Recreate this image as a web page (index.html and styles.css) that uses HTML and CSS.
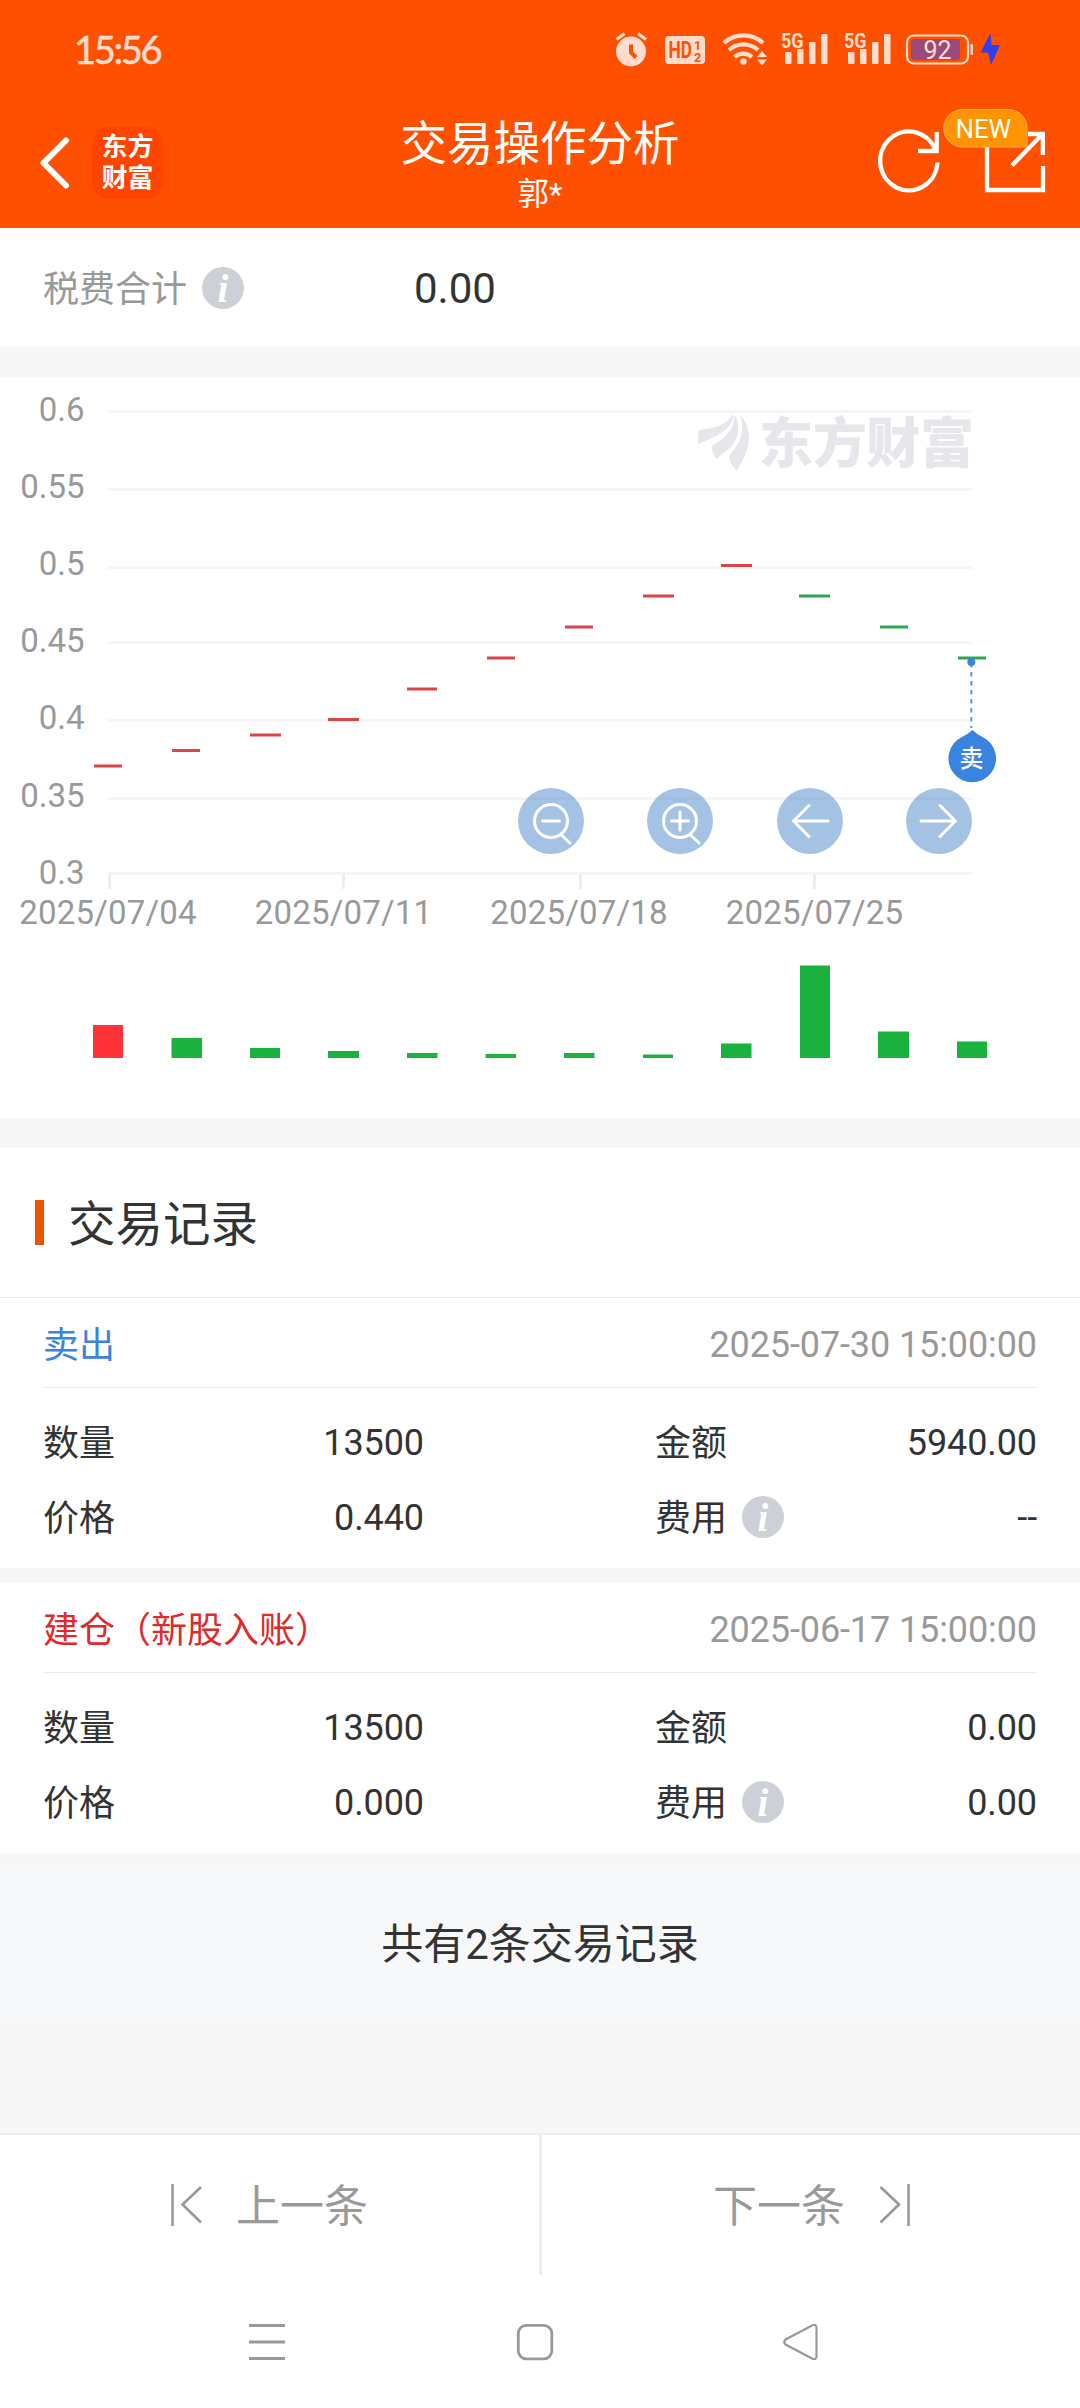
FILE: index.html
```html
<!DOCTYPE html>
<html lang="zh-CN">
<head>
<meta charset="utf-8">
<title>交易操作分析</title>
<link rel="stylesheet" href="styles.css">
</head>
<body>
<header class="header">
  <div class="statusbar">
    <span class="clock">15:56</span>
    <div class="status-icons">
      <svg width="34" height="36" viewBox="616 30 34 36">
        <circle cx="632" cy="50.500" r="15" fill="#ffdccc"/>
        <path d="M617.500 38.500l8-6M639 32.500l8 6" stroke="#ffdccc" stroke-width="3.200" fill="none"/>
        <path d="M632 43.500v8l5 5" stroke="#ff5000" stroke-width="4" fill="none"/>
      </svg>
      <svg width="40" height="36" viewBox="666 30 40 36">
        <rect x="666" y="35" width="40" height="28" rx="4" fill="#ffdccc"/>
        <text x="669.500" y="57" class="hd-main" textLength="23.500" lengthAdjust="spacingAndGlyphs">HD</text>
        <text x="695" y="48.500" class="hd-sub">1</text>
        <text x="695" y="60.500" class="hd-sub">2</text>
      </svg>
      <svg width="46" height="36" viewBox="723 30 46 36">
        <g fill="none" stroke="#ffdccc" stroke-width="4.200">
          <path d="M725 42a29 29 0 0 1 39 0"/>
          <path d="M730 49a21.500 21.500 0 0 1 29 0"/>
          <path d="M735.500 56a13 13 0 0 1 17.500 0"/>
        </g>
        <circle cx="744.500" cy="60.500" r="3.200" fill="#ffdccc"/>
        <path d="M758 56l5-6 5 6zM758 58.500h10l-5 6z" fill="#ffdccc"/>
      </svg>
      <svg class="signal" width="48" height="36" viewBox="0 0 48 36">
        <text x="0" y="16.500" class="net-label" textLength="22.500" lengthAdjust="spacingAndGlyphs">5G</text>
        <rect x="4" y="21" width="6.500" height="12" rx="1"/>
        <rect x="16" y="18" width="6.500" height="15" rx="1"/>
        <rect x="28" y="11" width="6.500" height="22" rx="1"/>
        <rect x="40" y="3" width="6.500" height="30" rx="1"/>
      </svg>
      <svg class="signal" width="48" height="36" viewBox="0 0 48 36">
        <text x="0" y="16.500" class="net-label" textLength="22.500" lengthAdjust="spacingAndGlyphs">5G</text>
        <rect x="4" y="21" width="6.500" height="12" rx="1"/>
        <rect x="16" y="18" width="6.500" height="15" rx="1"/>
        <rect x="28" y="11" width="6.500" height="22" rx="1"/>
        <rect x="40" y="3" width="6.500" height="30" rx="1"/>
      </svg>
      <svg width="96" height="36" viewBox="906 30 96 36">
        <rect x="908" y="34.500" width="61" height="28" rx="7" fill="none" stroke="#ffdccc" stroke-width="2.200"/>
        <rect x="912" y="38" width="49" height="21" rx="3" fill="#994a78"/>
        <rect x="971.500" y="43" width="2.500" height="11" rx="1" fill="#ffdccc"/>
        <text x="938.500" y="57.500" class="battery-level">92</text>
        <path d="M991.500 32l-10 19.500h7.500L992 64l9-20h-8.500z" fill="#2f3fee"/>
      </svg>
    </div>
  </div>
  <div class="titlebar">
    <svg class="back" width="32" height="56" viewBox="39 135 32 56"><path d="M66 140.500L43.500 163 66 185.500" fill="none" stroke="#fff" stroke-width="6" stroke-linecap="round" stroke-linejoin="round"/></svg>
    <div class="brand"><span>东方</span><span>财富</span></div>
    <div class="titles">
      <h1>交易操作分析</h1>
      <p>郭*</p>
    </div>
    <svg class="actions" width="172" height="96" viewBox="876 104 172 96">
      <g fill="none" stroke="#fff" stroke-width="4.300">
        <path d="M937.500 162.500A28.700 29.500 0 1 1 935.500 150"/>
        <path d="M936.700 132v19H918"/>
        <path d="M987 143v47h56v-24"/>
        <path d="M1028 134h14.800v21M1012 165.500l30-31"/>
      </g>
      <path d="M962.500 109.500h46a18.500 18.500 0 0 1 18.500 18.500v19h-64.500a18.750 18.750 0 0 1 0-37.500z" fill="#ff9300" stroke="#ffad55" stroke-width="1"/>
      <text x="983.500" y="138" class="new-label">NEW</text>
    </svg>
  </div>
</header>

<main>
  <section class="tax">
    <span class="tax-label">税费合计</span>
    <i class="info">i</i>
    <span class="tax-value">0.00</span>
  </section>

  <section class="chart">
    <svg width="1080" height="741" viewBox="0 377 1080 741">
      <g fill="#f5f5f5">
        <rect x="108" y="410" width="864" height="3"/>
        <rect x="108" y="488" width="864" height="3"/>
        <rect x="108" y="566" width="864" height="3"/>
        <rect x="108" y="641" width="864" height="3"/>
        <rect x="108" y="719" width="864" height="3"/>
        <rect x="108" y="797" width="864" height="3"/>
        <rect x="108" y="872" width="864" height="3"/>
      </g>
      <g fill="#eee">
        <rect x="108" y="874" width="3" height="15"/>
        <rect x="342" y="874" width="3" height="15"/>
        <rect x="579" y="874" width="3" height="15"/>
        <rect x="813" y="874" width="3" height="15"/>
      </g>
      <g class="axis-y">
        <text x="84.500" y="421">0.6</text>
        <text x="84.500" y="498">0.55</text>
        <text x="84.500" y="575">0.5</text>
        <text x="84.500" y="652">0.45</text>
        <text x="84.500" y="729">0.4</text>
        <text x="84.500" y="807">0.35</text>
        <text x="84.500" y="884">0.3</text>
      </g>
      <g class="axis-x">
        <text x="108" y="924">2025/07/04</text>
        <text x="343.500" y="924">2025/07/11</text>
        <text x="579" y="924">2025/07/18</text>
        <text x="814.500" y="924">2025/07/25</text>
      </g>
      <g fill="#e6e6eb">
        <path d="M698 443c0-6 0-10 1.500-13 12-2 26-3 33.500-16 2 14-16 22-35 30z"/>
        <path d="M712 446c8-6 22-12 22.500-31 8 12 3 26-6 34-5 4-8 6-12 10-3-4-5-8-4.500-13z"/>
        <path d="M740 415c9 9 11 22 7 34-2 8-6 14-10 22-4-5-8-8-8-15 6-8 18-18 11-41z"/>
        <text x="759" y="463" class="watermark" textLength="215">东方财富</text>
      </g>
      <g fill="#dc444a">
        <rect x="94" y="764.500" width="28" height="3"/>
        <rect x="172" y="749" width="28" height="3"/>
        <rect x="250" y="733.500" width="31" height="3"/>
        <rect x="328" y="718" width="31" height="3"/>
        <rect x="407" y="687.500" width="30" height="3"/>
        <rect x="487" y="656.500" width="28" height="3"/>
        <rect x="565" y="625.500" width="28" height="3"/>
        <rect x="643" y="594.500" width="31" height="3"/>
        <rect x="721" y="564" width="31" height="3"/>
      </g>
      <g fill="#2ea84d">
        <rect x="799" y="594.500" width="31" height="3"/>
        <rect x="880" y="625.500" width="28" height="3"/>
        <rect x="958" y="656.500" width="28" height="3"/>
      </g>
      <rect x="93" y="1025" width="30" height="33" fill="#fe3239"/>
      <g fill="#1ab13f">
        <rect x="171.500" y="1038" width="30.500" height="20"/>
        <rect x="250" y="1048" width="30" height="10"/>
        <rect x="328" y="1051" width="31" height="7"/>
        <rect x="407" y="1053" width="30.500" height="5"/>
        <rect x="485.500" y="1054" width="30.500" height="4"/>
        <rect x="564" y="1053" width="30.500" height="5"/>
        <rect x="643" y="1054.500" width="30" height="3.500"/>
        <rect x="721" y="1043.500" width="30.500" height="14.500"/>
        <rect x="800" y="965.500" width="30" height="92.500"/>
        <rect x="878" y="1031.500" width="31" height="26.500"/>
        <rect x="957" y="1041.500" width="30" height="16.500"/>
      </g>
      <path d="M971.300 663v65" stroke="#5a98e2" stroke-width="2" stroke-dasharray="4.500 4.500"/>
      <circle cx="971.300" cy="662" r="4" fill="#3884e0"/>
      <path d="M972.500 730q4 4 10 7a23.800 23.800 0 1 1-20.500 0q6-3 10.500-7z" fill="#3884e0"/>
      <text x="971.500" y="767" class="pin-label">卖</text>
    </svg>
    <div class="chart-tools">
      <svg width="66" height="66" viewBox="-33 -33 66 66"><circle r="33"/><g><circle r="16.500"/><path d="M-8.500 0H8.500M10.500 14l8.500 8"/></g></svg>
      <svg width="66" height="66" viewBox="-33 -33 66 66"><circle r="33"/><g><circle r="16.500"/><path d="M-8.500 0H8.500M0-9V9M10.500 14l8.500 8"/></g></svg>
      <svg width="66" height="66" viewBox="-33 -33 66 66"><circle r="33"/><g><path d="M18 0H-16.500M-1-15.500L-16.500 0-1 15.500"/></g></svg>
      <svg width="66" height="66" viewBox="-33 -33 66 66"><circle r="33"/><g><path d="M-18 0H16.500M1-15.500L16.500 0 1 15.500"/></g></svg>
    </div>
  </section>

  <section class="records">
    <h2><span>交易记录</span></h2>
    <article class="record">
      <div class="record-head"><span class="sell">卖出</span><time>2025-07-30 15:00:00</time></div>
      <dl>
        <div><dt>数量</dt><dd>13500</dd></div>
        <div><dt>金额</dt><dd>5940.00</dd></div>
        <div><dt>价格</dt><dd>0.440</dd></div>
        <div><dt>费用</dt><i class="info">i</i><dd>--</dd></div>
      </dl>
    </article>
    <article class="record">
      <div class="record-head"><span class="buy">建仓（新股入账）</span><time>2025-06-17 15:00:00</time></div>
      <dl>
        <div><dt>数量</dt><dd>13500</dd></div>
        <div><dt>金额</dt><dd>0.00</dd></div>
        <div><dt>价格</dt><dd>0.000</dd></div>
        <div><dt>费用</dt><i class="info">i</i><dd>0.00</dd></div>
      </dl>
    </article>
  </section>
  <p class="total">共有2条交易记录</p>
</main>

<footer>
  <div class="pager">
    <a class="prev"><svg width="34" height="44" viewBox="170 2183 34 44"><path d="M172.500 2184v42M201 2187l-18.500 17.500L201 2222.500"/></svg><span>上一条</span></a>
    <a class="next"><span>下一条</span><svg width="34" height="44" viewBox="878 2183 34 44"><path d="M908.500 2184v42M880.500 2187l18.500 17.500-18.500 18"/></svg></a>
  </div>
  <nav class="system-nav">
    <svg width="40" height="40" viewBox="247 2322 40 40"><path d="M249 2325.500h36M249 2342h36M249 2358.500h36"/></svg>
    <svg width="40" height="40" viewBox="515 2322 40 40"><rect x="518.300" y="2325.300" width="33.500" height="33.500" rx="8"/></svg>
    <svg width="40" height="40" viewBox="781 2322 40 40"><path d="M785.500 2339.500l27-14.300q4-1.500 4 2.500v28.500q0 4-4 2.500l-27-14.200q-2.500-2.500 0-5z"/></svg>
  </nav>
</footer>
</body>
</html>
```
FILE: styles.css
```css
* { box-sizing: border-box; margin: 0; padding: 0; }

body {
  width: 1080px;
  height: 2408px;
  display: flex;
  flex-direction: column;
  overflow: hidden;
  background: #f7f7f7;
  color: #333;
  font-family: Roboto, "Noto Sans CJK SC", sans-serif;
  font-size: 36px;
}

svg { display: block; flex: none; }

.info {
  width: 42px;
  height: 42px;
  flex: none;
  border-radius: 50%;
  background: #cdd0d6;
  color: #fff;
  font: italic bold 39px/44px "Liberation Serif", serif;
  text-align: center;
}

/* Header */
.header {
  height: 228px;
  flex: none;
  background: #ff5000;
  color: #fff;
}

.statusbar {
  height: 98px;
  padding: 0 78px 0 74px;
  display: flex;
  align-items: center;
  justify-content: space-between;
}

.clock {
  color: #ffdccc;
  font-family: Lato, Roboto, sans-serif;
  font-size: 38px;
  line-height: 44px;
  letter-spacing: -2.300px;
  -webkit-text-stroke: .6px #ffdccc;
}

.status-icons { display: flex; align-items: center; margin-right: 1px; }
.status-icons svg:nth-child(2) { margin-left: 16px; }
.status-icons svg:nth-child(3) { margin-left: 17px; }
.status-icons svg:nth-child(4) { margin-left: 13px; }
.status-icons svg:nth-child(5) { margin-left: 15px; }
.status-icons svg:nth-child(6) { margin-left: 13px; }
.signal { fill: #ffdccc; }
.net-label { font: 700 21px Roboto, sans-serif; }
.hd-main { font: 700 23px Roboto, sans-serif; fill: #ff5000; }
.hd-sub { font: 700 12.500px Roboto, sans-serif; fill: #ff5000; }
.battery-level { font: 400 25px Roboto, sans-serif; fill: #ffdccc; text-anchor: middle; }

.titlebar {
  height: 130px;
  padding: 0 32px 0 39px;
  display: grid;
  grid-template-columns: 53px 71px 1fr 172px;
  align-items: center;
}

.brand {
  height: 72px;
  padding: 5px 0;
  border-radius: 17px;
  background: #ff4400;
  display: flex;
  flex-direction: column;
  align-items: center;
  font-size: 26px;
  line-height: 31px;
  font-weight: 700;
}

.titles { width: 672px; margin-left: 41px; padding-top: 4px; text-align: center; }
h1 { font-size: 46.500px; font-weight: 400; line-height: 60px; }
.titles p { font-size: 31.500px; line-height: 42px; }
.actions { margin-top: -22px; }
.new-label { font: 400 25.500px Roboto, sans-serif; fill: #fff; text-anchor: middle; }

/* Tax total */
main { flex: 1; }
.tax {
  height: 119px;
  padding-left: 43px;
  display: flex;
  align-items: center;
  background: #fff;
}
.tax-label { width: 159px; padding-top: 4px; color: #999; line-height: 50px; }
.tax-value { margin-left: 170px; padding-top: 2px; font-size: 42px; line-height: 50px; }

/* Chart */
.chart {
  position: relative;
  height: 741px;
  margin-top: 30px;
  background: #fff;
}
.axis-y, .axis-x { font-size: 33px; fill: #999; }
.axis-y { text-anchor: end; }
.axis-x { text-anchor: middle; }
.axis-x text { letter-spacing: .2px; }
.watermark { font: 900 54px "Noto Sans CJK SC", sans-serif; }
.pin-label { font: 500 24px "Noto Sans CJK SC", sans-serif; fill: #fff; text-anchor: middle; }

.chart-tools {
  position: absolute;
  left: 518px;
  top: 411px;
  width: 454px;
  display: flex;
  justify-content: space-between;
}
.chart-tools svg > circle { fill: rgba(73, 133, 201, .5); }
.chart-tools g { fill: none; stroke: #fff; stroke-width: 3; stroke-linecap: round; stroke-linejoin: round; }

/* Trade records */
.records { margin-top: 30px; }
h2 {
  height: 150px;
  padding-left: 35px;
  display: flex;
  align-items: center;
  background: #fff;
  border-bottom: 1px solid #ebebeb;
  font-size: 47.500px;
  font-weight: 400;
  line-height: 60px;
}
h2::before { content: ""; width: 9px; height: 45px; margin-right: 24px; background: #eb5502; }
h2 span { padding-top: 5px; }

.record { height: 270px; padding: 0 43px; background: #fff; }
.record + .record { margin-top: 15px; }
.record-head {
  height: 90px;
  display: flex;
  align-items: center;
  justify-content: space-between;
  line-height: 50px;
  border-bottom: 1px solid #ebebeb;
}
.record-head time { padding-top: 4px; color: #999; letter-spacing: -.100px; }
.record-head span { padding-top: 6px; }
.sell { color: #3884e0; }
.buy { color: #dd2a2a; }

dl {
  padding-top: 16px;
  display: grid;
  grid-template-columns: 381px 382px;
  grid-auto-rows: 75px;
  column-gap: 231px;
}
dl > div { display: flex; align-items: center; line-height: 50px; }
dt { width: 87px; padding-top: 4px; }
dd { margin-left: auto; padding-top: 2px; letter-spacing: -.100px; }

.total {
  height: 150px;
  margin-top: 15px;
  background: #f7f8fa;
  font-size: 42px;
  line-height: 154px;
  text-align: center;
}

/* Bottom bars */
.pager {
  height: 142px;
  border-top: 2px solid #eee;
  display: grid;
  grid-template-columns: 1fr 1fr;
  background: #fff;
  color: #999;
  font-size: 44px;
}
.pager a { display: flex; align-items: center; line-height: 60px; }
.pager span { padding-top: 4px; }
.pager svg { fill: none; stroke: #999; stroke-width: 2.600; }
.prev { padding-left: 170px; gap: 32px; border-right: 1px solid #eee; }
.next { padding-left: 171px; gap: 33px; border-left: 2px solid #eee; }

.system-nav {
  height: 133px;
  padding-left: 247px;
  display: flex;
  align-items: center;
  background: #fff;
}
.system-nav svg { fill: none; stroke: #999; stroke-width: 2.800; }
.system-nav svg:nth-child(2) { margin-left: 228px; }
.system-nav svg:nth-child(3) { margin-left: 226px; stroke-width: 2.200; }
```
